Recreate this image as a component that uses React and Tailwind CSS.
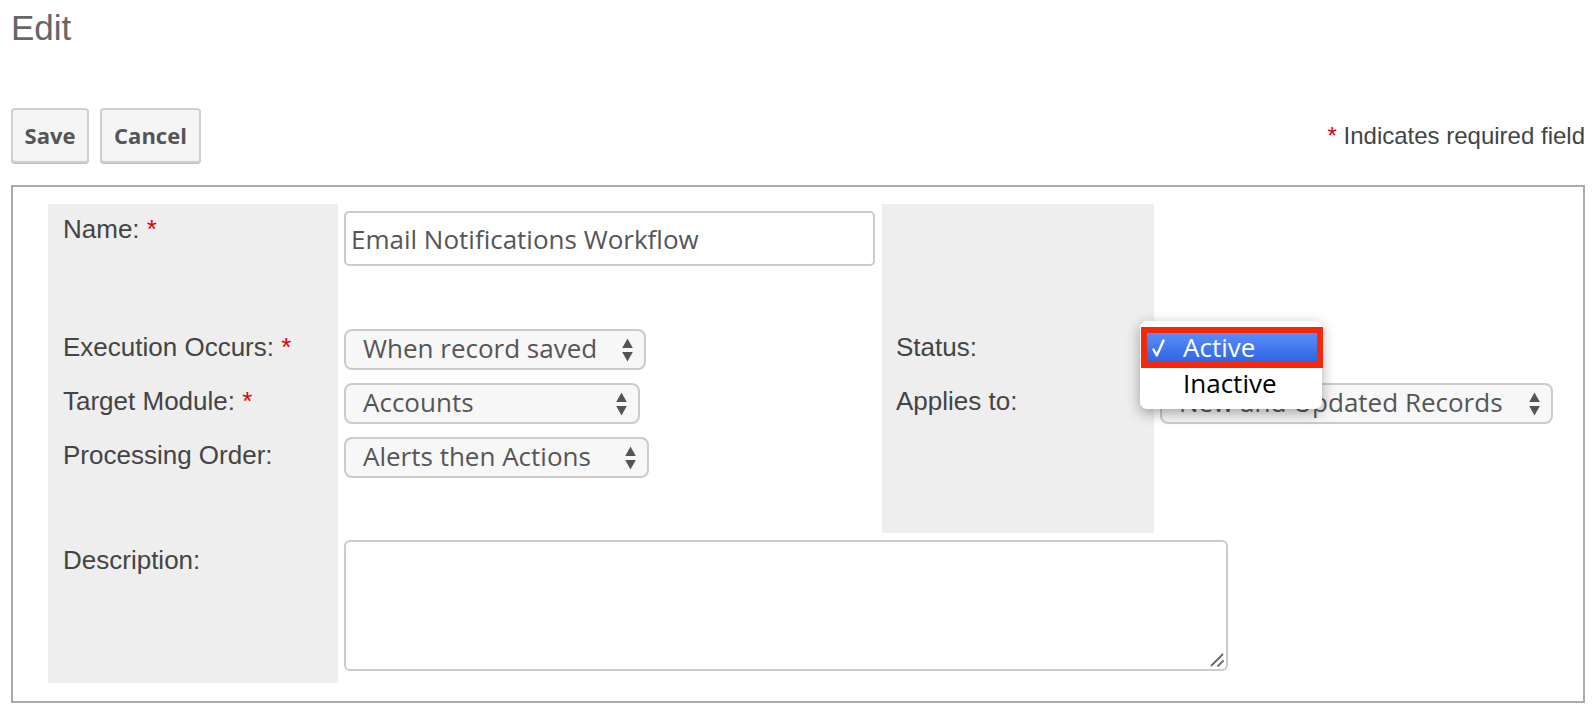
import React from "react";

const SANS = "font-['Liberation_Sans',Arial,sans-serif]";
const OPEN = "font-['Open_Sans',sans-serif]";

function UpDown() {
  return (
    <svg width="11" height="24" viewBox="0 0 11 24" aria-hidden="true">
      <path d="M5.5 0.5 L10.8 10 L0.2 10 Z" fill="#555" strokeLinejoin="round" />
      <path d="M0.2 14 L10.8 14 L5.5 23.5 Z" fill="#555" strokeLinejoin="round" />
    </svg>
  );
}

function Select({ value, className }) {
  return (
    <div
      role="combobox"
      className={`flex h-[41px] items-center justify-between rounded-[8px] border-2 border-[#cbcbcb] bg-[#f7f7f7] pl-[17px] pr-[11px] ${OPEN} text-[26px] leading-none text-[#555] ${className}`}
    >
      <span className="-mt-[3px] whitespace-nowrap">{value}</span>
      <UpDown />
    </div>
  );
}

function Req() {
  return <span className="text-[#e00000]"> *</span>;
}

function Label({ children, required, top = "pt-[10px]" }) {
  return (
    <div className={`bg-[#eeeeee] pl-[15px] ${top} text-[26px] leading-[30px] text-[#444]`}>
      {children}
      {required && <Req />}
    </div>
  );
}

function SideLabel({ children }) {
  return (
    <div className="bg-[#eeeeee] pl-[14px] pt-[10px] text-[26px] leading-[30px] text-[#444]">
      {children}
    </div>
  );
}

function Field({ children, className = "" }) {
  return <div className={`pl-[6px] pt-[7px] ${className}`}>{children}</div>;
}

function CheckMark() {
  return (
    <svg width="13" height="18" viewBox="0 0 13 18" aria-hidden="true">
      <path d="M1.5 10.5 L4.8 16.5 L11.5 1.5" fill="none" stroke="#fff" strokeWidth="2.4" strokeLinecap="round" strokeLinejoin="round" />
    </svg>
  );
}

// Open popup of the Status select, drawn over the field it belongs to
function StatusMenu() {
  return (
    <div className="absolute left-[1140px] top-[321px] h-[88px] w-[182px] rounded-[7px] bg-white pt-[6px] shadow-[0_4px_14px_rgba(0,0,0,0.35)]">
      <div className="ml-px flex h-[41px] w-[182px] items-center border-[6px] border-[#f5280a] bg-gradient-to-b from-[#5b8df8] to-[#2f64e6] pl-[5px]">
        <CheckMark />
        <span className={`-mt-[2px] ml-[18px] ${OPEN} text-[26px] leading-none text-white`}>Active</span>
      </div>
      <div className={`flex h-[29px] items-center pl-[43px] ${OPEN} text-[26px] leading-none text-black`}>
        Inactive
      </div>
    </div>
  );
}

function ResizeGrip() {
  return (
    <svg className="pointer-events-none absolute bottom-[4px] right-[4px]" width="14" height="14" viewBox="0 0 14 14" aria-hidden="true">
      <path d="M1 13 L13 1" stroke="#666" strokeWidth="1.8" />
      <path d="M7.5 13.5 L13.5 7.5" stroke="#666" strokeWidth="1.8" />
    </svg>
  );
}

export default function App() {
  return (
    <div className={`relative min-h-[708px] bg-white pl-[11px] pr-[7px] pt-[8px] ${SANS}`}>
      <h1 className="text-[35px] font-normal leading-[40px] text-[#666]">Edit</h1>

      <div className="mt-[60px] flex items-center justify-between">
        <div className="flex gap-[11px]">
          <button className={`h-[55px] w-[78px] rounded-[4px] border-2 border-[#cfcfcf] bg-[#f5f5f5] shadow-[0_1px_0_#bdbdbd] ${OPEN} text-[22px] font-bold text-[#555]`}>
            Save
          </button>
          <button className={`h-[55px] w-[101px] rounded-[4px] border-2 border-[#cfcfcf] bg-[#f5f5f5] shadow-[0_1px_0_#bdbdbd] ${OPEN} text-[22px] font-bold text-[#555]`}>
            Cancel
          </button>
        </div>
        <div className="text-[24px] text-[#444]">
          <span className="text-[#e00000]">*</span> Indicates required field
        </div>
      </div>

      <div className="mt-[22px] border-2 border-[#aaaaaa] pb-[18px] pl-[35px] pt-[17px]">
        <div className="grid grid-cols-[290px_544px_272px_1fr] grid-rows-[118px_54px_54px_54px_49px_150px]">
          {/* Name */}
          <Label required>Name:</Label>
          <Field>
            <input
              readOnly
              defaultValue="Email Notifications Workflow"
              className={`h-[55px] w-[531px] rounded-[5px] border-2 border-[#cbcbcb] bg-white px-[5px] ${OPEN} text-[26px] text-[#555] outline-none`}
            />
          </Field>
          <div className="bg-[#eeeeee]" />
          <div />

          {/* Execution / Status */}
          <Label required>Execution Occurs:</Label>
          <Field>
            <Select value="When record saved" className="w-[302px]" />
          </Field>
          <SideLabel>Status:</SideLabel>
          <Field>
            <Select value="" className="w-[160px]" />
          </Field>

          {/* Target module / Applies to */}
          <Label required>Target Module:</Label>
          <Field>
            <Select value="Accounts" className="w-[296px]" />
          </Field>
          <SideLabel>Applies to:</SideLabel>
          <Field>
            <Select value="New and Updated Records" className="w-[393px]" />
          </Field>

          {/* Processing order */}
          <Label>Processing Order:</Label>
          <Field>
            <Select value="Alerts then Actions" className="w-[305px]" />
          </Field>
          <div className="bg-[#eeeeee]" />
          <div />

          {/* spacer */}
          <div className="bg-[#eeeeee]" />
          <div />
          <div className="bg-[#eeeeee]" />
          <div />

          {/* Description */}
          <Label top="pt-[12px]">Description:</Label>
          <Field className="col-span-3">
            <div className="relative h-[131px] w-[884px]">
              <textarea
                className={`block h-[131px] w-[884px] resize-none rounded-[6px] border-2 border-[#cbcbcb] bg-white p-[5px] ${OPEN} text-[26px] text-[#555] outline-none`}
              />
              <ResizeGrip />
            </div>
          </Field>
        </div>
      </div>

      <StatusMenu />
    </div>
  );
}
